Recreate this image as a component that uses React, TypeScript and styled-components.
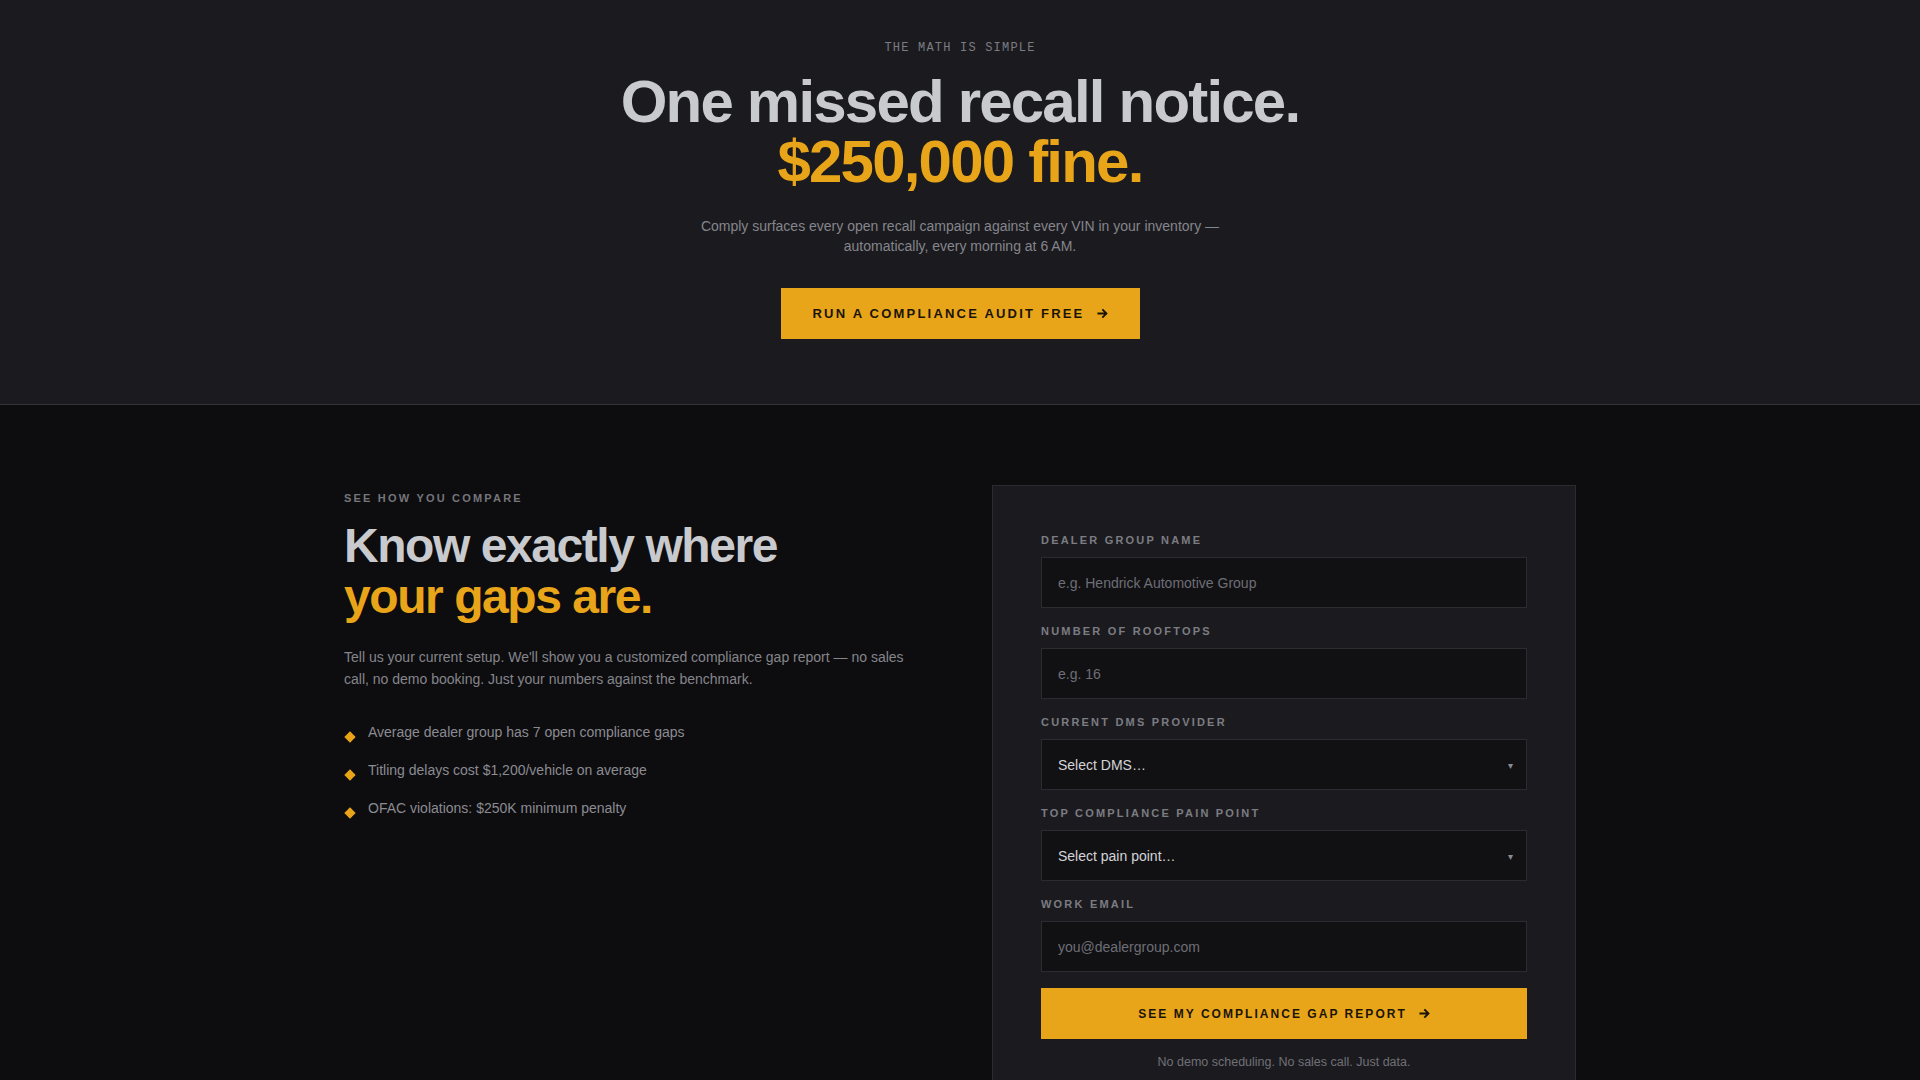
import styled, { createGlobalStyle } from 'styled-components';

const GlobalStyle = createGlobalStyle`
  * {
    box-sizing: border-box;
  }
  body {
    margin: 0;
    background: #0d0d0f;
    font-family: 'Liberation Sans', Arial, sans-serif;
    -webkit-font-smoothing: antialiased;
  }
`;

const ORANGE = '#e9a519';

const Hero = styled.section`
  background: #1b1b1f;
  border-bottom: 1px solid #34343a;
  padding: 42px 24px 65px;
  display: flex;
  flex-direction: column;
  align-items: center;
  text-align: center;
`;

const MonoKicker = styled.div`
  font-family: 'Liberation Mono', 'DejaVu Sans Mono', monospace;
  font-size: 12px;
  line-height: 13px;
  letter-spacing: 0.1em;
  color: #7c7c83;
  text-transform: uppercase;
  margin-bottom: 17px;
`;

const HeroTitle = styled.h1`
  margin: 0;
  font-size: 60px;
  line-height: 60px;
  font-weight: 700;
  letter-spacing: -0.03em;
  color: #c9cacd;
`;

const Accent = styled.span`
  display: block;
  color: ${ORANGE};
`;

const HeroText = styled.p`
  margin: 24px 0 0;
  max-width: 530px;
  font-size: 14px;
  line-height: 20px;
  color: #85858c;
`;

const CtaButton = styled.button<{ $block?: boolean }>`
  display: inline-flex;
  align-items: center;
  justify-content: center;
  gap: 12px;
  height: 51px;
  padding: 0 32px;
  width: ${(p) => (p.$block ? '100%' : 'auto')};
  margin-top: ${(p) => (p.$block ? '0' : '32px')};
  background: ${ORANGE};
  border: none;
  border-radius: 0;
  font-family: 'Liberation Sans', Arial, sans-serif;
  font-size: ${(p) => (p.$block ? '12px' : '13px')};
  font-weight: 700;
  letter-spacing: 0.17em;
  text-transform: uppercase;
  color: #1a1408;
  cursor: pointer;
`;

const Compare = styled.section`
  background: #0d0d0f;
  padding: 80px 0 40px;
`;

const Container = styled.div`
  width: 1232px;
  margin: 0 auto;
  display: grid;
  grid-template-columns: 1fr 1fr;
  gap: 64px;
  align-items: start;
`;

const LeftCol = styled.div`
  padding-top: 5px;
`;

const Eyebrow = styled.div`
  font-size: 11px;
  line-height: 16px;
  font-weight: 700;
  letter-spacing: 0.2em;
  text-transform: uppercase;
  color: #75757c;
  margin-bottom: 14px;
`;

const SectionTitle = styled.h2`
  margin: 0;
  font-size: 48px;
  line-height: 51px;
  font-weight: 700;
  letter-spacing: -0.03em;
  color: #c9cacd;
`;

const Lead = styled.p`
  margin: 24px 0 0;
  max-width: 570px;
  font-size: 14px;
  line-height: 22.4px;
  color: #85858c;
`;

const StatList = styled.ul`
  list-style: none;
  margin: 30px 0 0;
  padding: 0;
  display: flex;
  flex-direction: column;
  gap: 16px;
`;

const Stat = styled.li`
  display: flex;
  align-items: flex-start;
  gap: 14px;
  font-size: 14px;
  line-height: 22px;
  color: #8b8b92;
`;

const Diamond = styled.span`
  flex: none;
  width: 8px;
  height: 8px;
  margin: 12px 0 0 2px;
  background: ${ORANGE};
  transform: rotate(45deg);
`;

const Card = styled.form`
  background: #1b1b1f;
  border: 1px solid #2a2a30;
  padding: 47px 48px 16px;
  display: flex;
  flex-direction: column;
  gap: 16px;
`;

const Field = styled.label`
  display: flex;
  flex-direction: column;
`;

const FieldLabel = styled.span`
  font-size: 11px;
  line-height: 14px;
  font-weight: 700;
  letter-spacing: 0.2em;
  text-transform: uppercase;
  color: #7c7c83;
  margin-bottom: 10px;
`;

const Input = styled.input`
  height: 51px;
  padding: 0 16px;
  background: #111114;
  border: 1px solid #2b2b31;
  border-radius: 0;
  outline: none;
  font-family: 'Liberation Sans', Arial, sans-serif;
  font-size: 14px;
  color: #d4d4d8;
  &::placeholder {
    color: #6e6e75;
  }
`;

const SelectWrap = styled.div`
  position: relative;
`;

const Select = styled.select`
  width: 100%;
  height: 51px;
  padding: 0 16px;
  appearance: none;
  background: #111114;
  border: 1px solid #2b2b31;
  border-radius: 0;
  outline: none;
  font-family: 'Liberation Sans', Arial, sans-serif;
  font-size: 14px;
  color: #d4d4d8;
`;

const Caret = styled.span`
  position: absolute;
  right: 14px;
  top: 50%;
  transform: translateY(-50%);
  font-size: 10px;
  color: #8b8b92;
  pointer-events: none;
`;

const FormFoot = styled.div`
  margin-top: 14px;
  text-align: center;
  font-size: 12.5px;
  line-height: 18px;
  color: #707077;
`;

function Arrow() {
  return (
    <svg width="11" height="11" viewBox="0 0 12 12" fill="none">
      <path
        d="M1.5 6h8.5M6.5 2.2 10.3 6l-3.8 3.8"
        stroke="currentColor"
        strokeWidth="2"
        strokeLinecap="square"
      />
    </svg>
  );
}

const stats = [
  'Average dealer group has 7 open compliance gaps',
  'Titling delays cost $1,200/vehicle on average',
  'OFAC violations: $250K minimum penalty',
];

function App() {
  return (
    <>
      <GlobalStyle />
      <Hero>
        <MonoKicker>The math is simple</MonoKicker>
        <HeroTitle>
          One missed recall notice.
          <Accent>$250,000 fine.</Accent>
        </HeroTitle>
        <HeroText>
          Comply surfaces every open recall campaign against every VIN in your
          inventory — automatically, every morning at 6 AM.
        </HeroText>
        <CtaButton type="button">
          Run a compliance audit free
          <Arrow />
        </CtaButton>
      </Hero>

      <Compare>
        <Container>
          <LeftCol>
            <Eyebrow>See how you compare</Eyebrow>
            <SectionTitle>
              Know exactly where
              <Accent>your gaps are.</Accent>
            </SectionTitle>
            <Lead>
              Tell us your current setup. We'll show you a customized compliance
              gap report — no sales call, no demo booking. Just your numbers
              against the benchmark.
            </Lead>
            <StatList>
              {stats.map((s) => (
                <Stat key={s}>
                  <Diamond />
                  {s}
                </Stat>
              ))}
            </StatList>
          </LeftCol>

          <Card onSubmit={(e) => e.preventDefault()}>
            <Field>
              <FieldLabel>Dealer group name</FieldLabel>
              <Input placeholder="e.g. Hendrick Automotive Group" />
            </Field>
            <Field>
              <FieldLabel>Number of rooftops</FieldLabel>
              <Input placeholder="e.g. 16" />
            </Field>
            <Field>
              <FieldLabel>Current DMS provider</FieldLabel>
              <SelectWrap>
                <Select defaultValue="">
                  <option value="">Select DMS…</option>
                  <option>CDK Global</option>
                  <option>Reynolds &amp; Reynolds</option>
                  <option>Dealertrack</option>
                </Select>
                <Caret>▾</Caret>
              </SelectWrap>
            </Field>
            <Field>
              <FieldLabel>Top compliance pain point</FieldLabel>
              <SelectWrap>
                <Select defaultValue="">
                  <option value="">Select pain point…</option>
                  <option>Recalls</option>
                  <option>Titling</option>
                  <option>OFAC</option>
                </Select>
                <Caret>▾</Caret>
              </SelectWrap>
            </Field>
            <Field>
              <FieldLabel>Work email</FieldLabel>
              <Input type="email" placeholder="you@dealergroup.com" />
            </Field>
            <div>
              <CtaButton type="submit" $block>
                See my compliance gap report
                <Arrow />
              </CtaButton>
              <FormFoot>No demo scheduling. No sales call. Just data.</FormFoot>
            </div>
          </Card>
        </Container>
      </Compare>
    </>
  );
}

export default App;
